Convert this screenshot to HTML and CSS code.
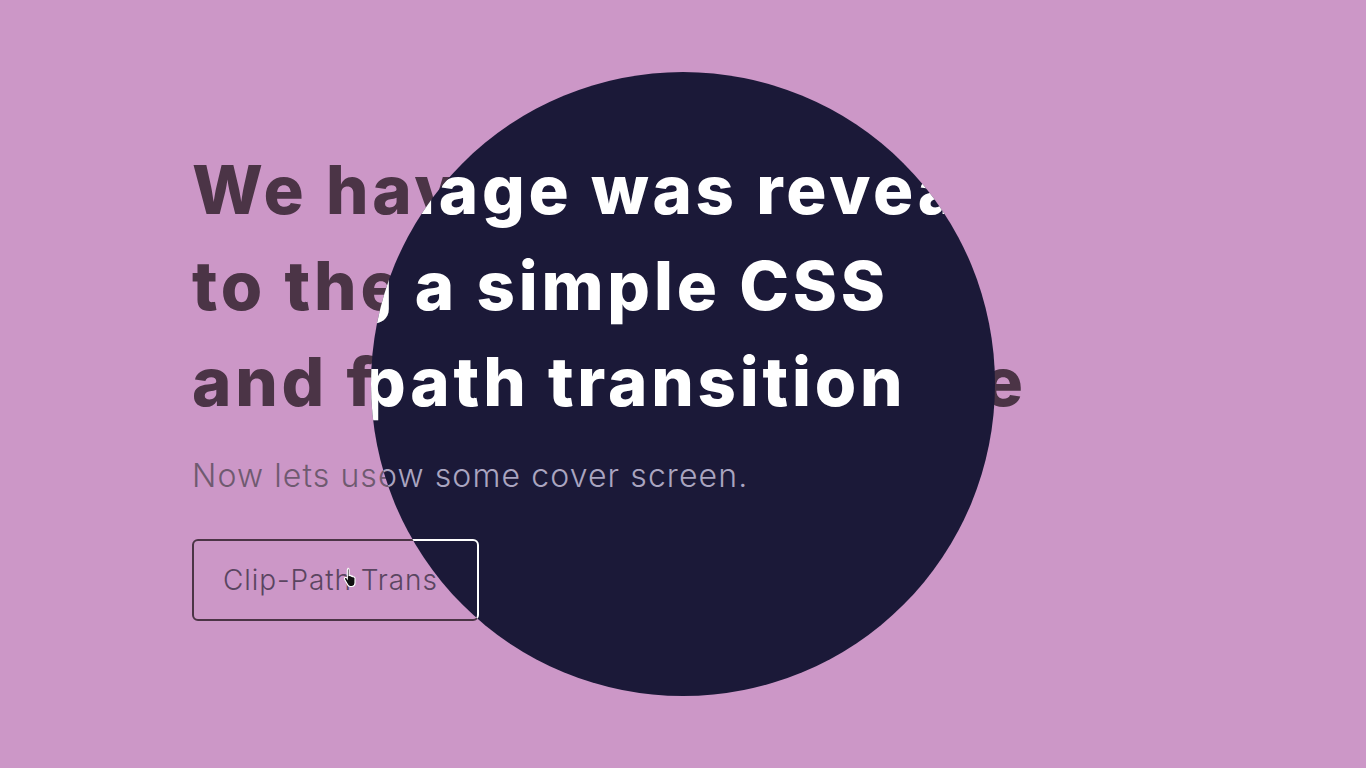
FILE: index.html
```html
<!DOCTYPE html>
<html lang="en">
<head>
<meta charset="utf-8">
<title>Clip-Path Transition</title>
<link rel="stylesheet" href="styles.css">
</head>
<body>
<main class="stage">
  <section class="layer back">
    <div class="content">
      <h1 class="title">
        <span class="line">We have a hidden</span>
        <span class="line">to the side of it</span>
        <span class="line">and finally a page here</span>
      </h1>
      <p class="sub">Now lets use clip-path now.</p>
      <button class="btn" type="button">Clip-Path Trans</button>
    </div>
  </section>
  <section class="layer front">
    <div class="content">
      <h1 class="title">
        <span class="line">The image was revealed</span>
        <span class="line">using a simple CSS</span>
        <span class="line">clip-path transition</span>
      </h1>
      <p class="sub">Now lets show some cover screen.</p>
      <button class="btn" type="button" aria-label="Clip-Path Transition"></button>
    </div>
  </section>
  <svg class="cursor" width="16" height="20" viewBox="0 0 14 18" aria-hidden="true">
    <path d="M4 1.2c.8 0 1.3.6 1.3 1.3v5.2l.6-.1c.7-.1 1.2.2 1.4.7.6-.2 1.3 0 1.6.6.6-.2 1.4.1 1.6.8l.1.4v4.2c0 1.6-1 3-2.6 3.2H6.2c-.9 0-1.6-.5-2-1.2L1.3 11.2c-.4-.7-.2-1.4.4-1.7.6-.3 1.2-.1 1.6.4l.4.6V2.5c0-.7.4-1.3 1.2-1.3z" fill="#111" stroke="#fff" stroke-width="1"/>
  </svg>
</main>
</body>
</html>
```

FILE: styles.css
```css
* { box-sizing: border-box; margin: 0; padding: 0; }
html, body { width: 100%; height: 100%; }
body { background: #cc97c7; overflow: hidden; }

.stage {
  position: relative;
  width: 1366px;
  height: 768px;
}

.layer {
  position: absolute;
  inset: 0;
}
.back { background: #cc97c7; color: #4b3446; }
.front {
  background: #1b1938;
  color: #ffffff;
  clip-path: circle(312px at 683px 384px);
}

.content {
  display: flex;
  flex-direction: column;
  align-items: flex-start;
  padding: 142px 0 0 192px;
}

.title {
  display: flex;
  flex-direction: column;
  font-family: "Inter", "Open Sans", sans-serif;
  font-weight: 800;
  font-size: 67px;
  line-height: 96px;
  letter-spacing: 3.8px;
}
.line { white-space: nowrap; }

.sub {
  margin-top: 27px;
  font-family: "Inter", "Open Sans", sans-serif;
  font-weight: 300;
  font-size: 32px;
  line-height: 38px;
  letter-spacing: 1.1px;
  color: #6f5a70;
}
.front .sub { color: #aaa5c0; }

.btn {
  margin-top: 44px;
  width: 287px;
  height: 82px;
  padding: 0 0 0 29px;
  text-align: left;
  white-space: nowrap;
  background: transparent;
  border: 2px solid #4b3446;
  border-radius: 6px;
  font-family: "Inter", "Open Sans", sans-serif;
  font-weight: 300;
  font-size: 28px;
  letter-spacing: 0.9px;
  color: #5a4560;
}
.front .btn {
  border-color: #ffffff;
}

.cursor {
  position: absolute;
  left: 343px;
  top: 567px;
}
```
